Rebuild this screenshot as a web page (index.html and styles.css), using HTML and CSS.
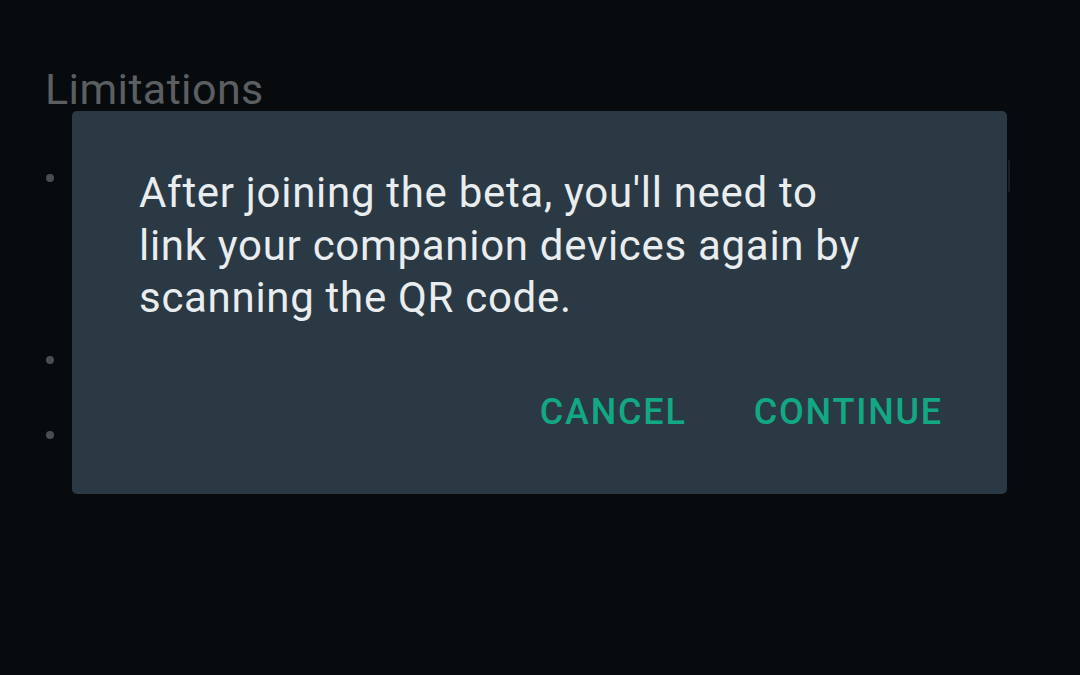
FILE: index.html
```html
<!DOCTYPE html>
<html>
<head>
<meta charset="utf-8">
<link rel="stylesheet" href="styles.css">
</head>
<body>
<div class="page">
  <h2 class="heading">Limitations</h2>
  <ul class="bullets">
    <li class="b1"></li>
    <li class="b2"></li>
    <li class="b3"></li>
  </ul>
  <div class="edge"></div>
</div>
<div class="dialog">
  <p class="message">After joining the beta, you'll need to link your companion devices again by scanning the QR code.</p>
  <div class="actions">
    <span class="btn">CANCEL</span>
    <span class="btn">CONTINUE</span>
  </div>
</div>
</body>
</html>
```
FILE: styles.css
```css
html, body {
  margin: 0;
  padding: 0;
  width: 1080px;
  height: 675px;
  overflow: hidden;
  background: #080b0e;
  font-family: Roboto, "Liberation Sans", sans-serif;
}
.page {
  padding: 64px 0 0 45px;
}
.heading {
  margin: 0;
  font-weight: 400;
  font-size: 43px;
  letter-spacing: 0.4px;
  line-height: 50px;
  color: #5c5f62;
}
.bullets {
  list-style: none;
  margin: 0;
  padding: 0;
}
.bullets li {
  width: 8px;
  height: 8px;
  border-radius: 50%;
  background: #4b4e51;
  margin-left: 1px;
}
.b1 { margin-top: 60px; }
.b2 { margin-top: 174px; }
.b3 { margin-top: 67px; }
.edge {
  position: absolute;
  left: 1008px;
  top: 160px;
  width: 2px;
  height: 32px;
  background: #191e23;
  border-radius: 1px;
}
.dialog {
  position: absolute;
  left: 72px;
  top: 111px;
  width: 935px;
  height: 383px;
  box-sizing: border-box;
  background: #2a3944;
  border-radius: 5px;
  padding: 56px 60px 0 67px;
  display: flex;
  flex-direction: column;
}
.message {
  margin: 0;
  font-size: 42px;
  letter-spacing: 0.7px;
  line-height: 52.5px;
  color: #e9edef;
  width: 740px;
}
.actions {
  display: flex;
  justify-content: flex-end;
  gap: 67px;
  margin-top: 67px;
  padding-right: 4px;
}
.btn {
  font-weight: 500;
  font-size: 36px;
  letter-spacing: 1.8px;
  line-height: 40px;
  color: #12a883;
}
```
